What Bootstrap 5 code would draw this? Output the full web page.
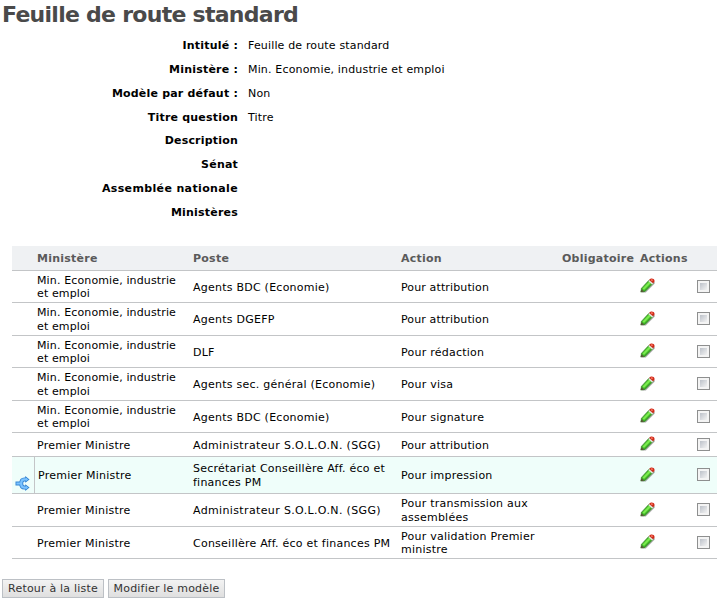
<!DOCTYPE html>
<html lang="fr">
<head>
<meta charset="utf-8">
<title>Feuille de route standard</title>
<link rel="stylesheet" href="https://cdn.jsdelivr.net/npm/bootstrap@5.3.0/dist/css/bootstrap.min.css">
<style>
body{font:11px/13.4px Verdana,"DejaVu Sans",sans-serif;color:#000;background:#fff;overflow:hidden}
h1{font-size:22px;line-height:26px;color:#4a4a4a;padding:2px 0 0 2px;height:33px;letter-spacing:-.73px}
.field{height:23.87px;line-height:25px}
.field dt{width:238px;letter-spacing:.2px}
.field dd{padding-left:10px;letter-spacing:.16px}
.field dt.wide,.wide{letter-spacing:.36px}
.snug{letter-spacing:.13px}
.steps{width:705px;margin:22px 0 0 12px;table-layout:fixed;border-collapse:separate;border-spacing:0;letter-spacing:.24px}
.steps th{height:25px;background:#eff1f3;color:#5a5a5a;padding-top:1px!important}
.steps th,.steps td{padding:0 0 0 3px;border-bottom:1px solid #c3c5c7;white-space:nowrap;vertical-align:middle}
.steps td:nth-child(-n+4){padding-top:2px}
.steps tr.h24 td{height:24px}.steps tr.h32 td{height:32px}.steps tr.h33 td{height:33px}.steps tr.h37 td{height:37px}
.steps svg{display:block}
.parallel td{background:#effefa}
.parallel td.fork{vertical-align:bottom;padding:0 0 2px 3px}
.parallel td:nth-child(2){border-left:1px solid #c3c5c7}
.box{appearance:none;display:block;width:13px;height:13px;margin:0 0 0 2px;border:1px solid #8e8f8f;background:linear-gradient(135deg,#bcc1c9,#f3f3f3) 2px 2px/7px 7px no-repeat,#f4f4f4}
.actions{margin:20px 0 0 2px}
.action-btn{height:19px;line-height:15px;font-size:11px;border:1px solid #bcc0c5;border-radius:0;padding:1px 0;color:#333;background:linear-gradient(#f3f3f3,#dfdfdf);white-space:nowrap;text-align:center;letter-spacing:.2px}
.w1{width:102px}.w2{width:117px}
</style>
<script src="https://cdn.jsdelivr.net/npm/bootstrap@5.3.0/dist/js/bootstrap.bundle.min.js"></script>
</head>
<body>
<svg width="0" height="0" class="position-absolute">
<defs>
<symbol id="pencil" viewBox="0 0 16 16">
<path d="M2 14.8 5.8 14.6 14.8 5.6 14.6 3.4 4 12z" fill="#666" opacity=".5"/>
<path d="M.8 14 1.5 10.2 9.2 1.9 13.2 5.3 5.1 13.4z" fill="#3fae28" stroke="#2f7d1f" stroke-width=".6"/>
<path d="M2.5 10.6 9.4 3.2 11.2 4.8 4 12z" fill="#79ec4c"/>
<path d="M.8 14.2 1.3 11.2 4 13.5z" fill="#5a5238"/>
<path d="M8.2 3 9.3 1.9 13.2 5.2 12 6.4z" fill="#e5e2e0"/>
<path d="M9.2 1.9C10.4.2 12.2 0 13.6 1 15 2.2 14.9 4.2 13.2 5.3z" fill="#cf2a1b"/>
<path d="M10.6 1.9 12 1.1 13 2.4 11.8 3z" fill="#ff8068"/>
</symbol>
<symbol id="fork" viewBox="0 0 15 15">
<path d="M.5 7.5H5.8M11.8 3.4H9.4Q6.2 3.4 6.2 7.5T9.4 11.6H11.8" fill="none" stroke="#3585d4" stroke-width="4"/>
<path d="M10.2 0 14.6 3.4 10.2 6.8zM10.2 8.2 14.6 11.6 10.2 15z" fill="#3585d4"/>
<path d="M1.4 7.5H6M11.6 3.4H9.4Q6.2 3.4 6.2 7.5T9.4 11.6H11.6" fill="none" stroke="#7bc3ff" stroke-width="2.2"/>
<path d="M11 1.8 13.2 3.4 11 5zM11 10 13.2 11.6 11 13.2z" fill="#7bc3ff"/>
</symbol>
</defs>
</svg>
<h1 class="fw-bold m-0">Feuille de route standard</h1>
<dl class="m-0">
<div class="field d-flex"><dt class="text-end">Intitulé :</dt><dd class="m-0">Feuille de route standard</dd></div>
<div class="field d-flex"><dt class="text-end">Ministère :</dt><dd class="m-0">Min. Economie, industrie et emploi</dd></div>
<div class="field d-flex"><dt class="text-end">Modèle par défaut :</dt><dd class="m-0">Non</dd></div>
<div class="field d-flex"><dt class="text-end">Titre question</dt><dd class="m-0">Titre</dd></div>
<div class="field d-flex"><dt class="text-end">Description</dt></div>
<div class="field d-flex"><dt class="text-end">Sénat</dt></div>
<div class="field d-flex"><dt class="text-end wide">Assemblée nationale</dt></div>
<div class="field d-flex"><dt class="text-end">Ministères</dt></div>
</dl>
<table class="steps">
<colgroup><col style="width:22px"><col style="width:156px"><col style="width:208px"><col style="width:161px"><col style="width:78px"><col style="width:55px"><col style="width:25px"></colgroup>
<thead><tr><th></th><th>Ministère</th><th>Poste</th><th>Action</th><th>Obligatoire</th><th>Actions</th><th></th></tr></thead>
<tbody>
<tr class="h32"><td></td><td class="snug">Min. Economie, industrie<br>et emploi</td><td>Agents BDC (Economie)</td><td class="snug">Pour attribution</td><td></td><td><svg width="16" height="16"><use href="#pencil"/></svg></td><td><input type="checkbox" class="box"></td></tr>
<tr class="h33"><td></td><td class="snug">Min. Economie, industrie<br>et emploi</td><td>Agents DGEFP</td><td class="snug">Pour attribution</td><td></td><td><svg width="16" height="16"><use href="#pencil"/></svg></td><td><input type="checkbox" class="box"></td></tr>
<tr class="h32"><td></td><td class="snug">Min. Economie, industrie<br>et emploi</td><td>DLF</td><td>Pour rédaction</td><td></td><td><svg width="16" height="16"><use href="#pencil"/></svg></td><td><input type="checkbox" class="box"></td></tr>
<tr class="h33"><td></td><td class="snug">Min. Economie, industrie<br>et emploi</td><td>Agents sec. général (Economie)</td><td>Pour visa</td><td></td><td><svg width="16" height="16"><use href="#pencil"/></svg></td><td><input type="checkbox" class="box"></td></tr>
<tr class="h32"><td></td><td class="snug">Min. Economie, industrie<br>et emploi</td><td>Agents BDC (Economie)</td><td>Pour signature</td><td></td><td><svg width="16" height="16"><use href="#pencil"/></svg></td><td><input type="checkbox" class="box"></td></tr>
<tr class="h24"><td></td><td>Premier Ministre</td><td class="wide">Administrateur S.O.L.O.N. (SGG)</td><td class="snug">Pour attribution</td><td></td><td><svg width="16" height="16"><use href="#pencil"/></svg></td><td><input type="checkbox" class="box"></td></tr>
<tr class="h37 parallel"><td class="fork"><svg width="15" height="15"><use href="#fork"/></svg></td><td>Premier Ministre</td><td>Secrétariat Conseillère Aff. éco et<br>finances PM</td><td>Pour impression</td><td></td><td><svg width="16" height="16"><use href="#pencil"/></svg></td><td><input type="checkbox" class="box"></td></tr>
<tr class="h33"><td></td><td>Premier Ministre</td><td class="wide">Administrateur S.O.L.O.N. (SGG)</td><td>Pour transmission aux<br>assemblées</td><td></td><td><svg width="16" height="16"><use href="#pencil"/></svg></td><td><input type="checkbox" class="box"></td></tr>
<tr class="h32"><td></td><td>Premier Ministre</td><td>Conseillère Aff. éco et finances PM</td><td>Pour validation Premier<br>ministre</td><td></td><td><svg width="16" height="16"><use href="#pencil"/></svg></td><td><input type="checkbox" class="box"></td></tr>
</tbody>
</table>
<div class="actions d-flex gap-1"><button class="action-btn w1">Retour à la liste</button><button class="action-btn w2">Modifier le modèle</button></div>
</body>
</html>
